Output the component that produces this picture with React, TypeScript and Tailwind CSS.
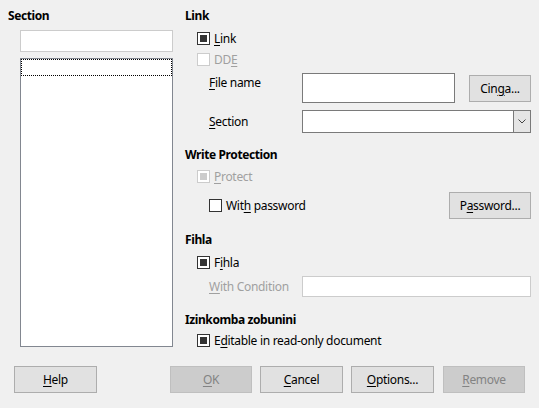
import type { ReactNode } from "react";

const Mn = ({ children }: { children: ReactNode }) => (
  <span className="underline underline-offset-2 decoration-1">{children}</span>
);

const Check = ({ checked, disabled }: { checked?: boolean; disabled?: boolean }) => (
  <span
    className={`flex h-[13px] w-[13px] shrink-0 items-center justify-center border bg-white ${
      disabled ? "border-[#cccccc]" : "border-[#333333]"
    }`}
  >
    {checked && <span className={`h-[7px] w-[7px] ${disabled ? "bg-[#cccccc]" : "bg-[#333333]"}`} />}
  </span>
);

const CheckRow = ({
  checked,
  disabled,
  className,
  children
}: {
  checked?: boolean;
  disabled?: boolean;
  className?: string;
  children: ReactNode;
}) => (
  <div className={`flex h-[13px] items-center gap-[4px] ${className ?? ""} ${disabled ? "text-[#a0a0a0]" : ""}`}>
    <Check checked={checked} disabled={disabled} />
    <span className="leading-4">{children}</span>
  </div>
);

const Button = ({
  disabled,
  className,
  children
}: {
  disabled?: boolean;
  className?: string;
  children: ReactNode;
}) => (
  <div
    className={`flex h-[27px] items-center justify-center border ${
      disabled ? "border-[#bfbfbf] bg-[#cccccc] text-[#838383]" : "border-[#adadad] bg-[#e1e1e1]"
    } ${className ?? ""}`}
  >
    {children}
  </div>
);

const Header = ({ className, children }: { className?: string; children: ReactNode }) => (
  <div className={`h-4 font-bold leading-4 tracking-[-0.4px] ${className ?? ""}`}>{children}</div>
);

export default function App() {
  return (
    <div
      className="flex h-[408px] w-[539px] flex-col bg-[#f0f0f0] text-[12px] tracking-[-0.3px] text-black"
      style={{ fontFamily: '"Noto Sans", "Open Sans", sans-serif' }}
    >
      <div className="flex h-[347px]">
        <div className="flex w-[177px] flex-col pl-[8px]">
          <Header className="mt-[8px]">Section</Header>
          <div className="ml-[12px] mt-[6px] h-[22px] w-[153px] border border-[#cccccc] bg-white" />
          <div className="ml-[12px] mt-[6px] w-[153px] flex-1 border border-[#828790] bg-white">
            <div className="h-[17px] border border-dotted border-black" />
          </div>
        </div>

        <div className="flex flex-1 flex-col pl-[8px] pr-[8px]">
          <Header className="mt-[8px]">Link</Header>
          <CheckRow checked className="ml-[12px] mt-[8px]">
            <Mn>L</Mn>ink
          </CheckRow>
          <CheckRow disabled className="ml-[12px] mt-[8px]">
            DD<Mn>E</Mn>
          </CheckRow>

          <div className="mt-[7px] flex h-[30px] items-start">
            <span className="ml-[24px] mt-[2px] w-[93px] leading-4">
              <Mn>F</Mn>ile name
            </span>
            <div className="h-[30px] w-[153px] border border-[#7a7a7a] bg-white" />
            <Button className="ml-auto mt-[2px] w-[62px]">
              Cin<Mn>g</Mn>a...
            </Button>
          </div>

          <div className="mt-[7px] flex h-[23px] items-center">
            <span className="ml-[24px] w-[93px] leading-4">
              <Mn>S</Mn>ection
            </span>
            <div className="flex h-[23px] flex-1 border border-[#7a7a7a] bg-white">
              <div className="ml-auto flex w-[17px] items-center justify-center border-l border-[#7a7a7a] bg-[#e5e5e5]">
                <svg width="8" height="5" viewBox="0 0 8 5" fill="none">
                  <path d="M0.5 0.5 L4 4 L7.5 0.5" stroke="#444" strokeWidth="1" />
                </svg>
              </div>
            </div>
          </div>

          <Header className="mt-[14px]">Write Protection</Header>
          <CheckRow checked disabled className="ml-[12px] mt-[7px]">
            <Mn>P</Mn>rotect
          </CheckRow>
          <div className="mt-[9px] flex h-[27px] items-center">
            <CheckRow className="ml-[24px]">
              Wit<Mn>h</Mn> password
            </CheckRow>
            <Button className="ml-auto w-[82px]">
              P<Mn>a</Mn>ssword...
            </Button>
          </div>

          <Header className="mt-[13px]">Fihla</Header>
          <CheckRow checked className="ml-[12px] mt-[8px]">
            F<Mn>i</Mn>hla
          </CheckRow>
          <div className="mt-[7px] flex h-[21px] items-center">
            <span className="ml-[24px] w-[93px] leading-4 text-[#a0a0a0]">
              <Mn>W</Mn>ith Condition
            </span>
            <div className="h-[21px] flex-1 border border-[#cccccc] bg-white" />
          </div>

          <Header className="mt-[15px]">Izinkomba zobunini</Header>
          <CheckRow checked className="ml-[12px] mt-[6px]">
            E<Mn>d</Mn>itable in read-only document
          </CheckRow>
        </div>
      </div>

      <div className="mt-[19px] flex">
        <Button className="ml-[14px] w-[83px]">
          <Mn>H</Mn>elp
        </Button>
        <Button disabled className="ml-[73px] w-[82px]">
          <Mn>O</Mn>K
        </Button>
        <Button className="ml-[8px] w-[83px]">
          <Mn>C</Mn>ancel
        </Button>
        <Button className="ml-[8px] w-[83px]">
          <Mn>O</Mn>ptions...
        </Button>
        <Button disabled className="ml-[9px] w-[82px]">
          <Mn>R</Mn>emove
        </Button>
      </div>
    </div>
  );
}
